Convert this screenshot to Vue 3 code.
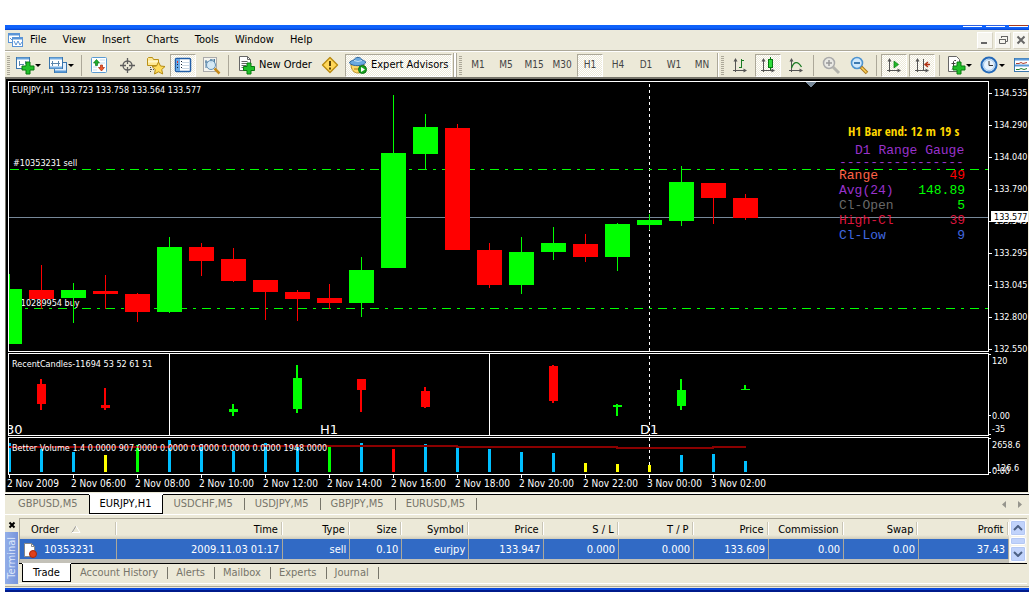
<script setup>
const menus = ['File', 'View', 'Insert', 'Charts', 'Tools', 'Window', 'Help']
const frames = ['M1', 'M5', 'M15', 'M30', 'H1', 'H4', 'D1', 'W1', 'MN']

const axes = '<path d="M4.500 3v13M2 14.500h12" stroke="#555" fill="none"/><path d="M2.500 5.500h4L4.500 2zM12.500 12.500v4L16 14.500z" fill="#555"/>'
const lens = '<circle cx="7" cy="7" r="5.5"/>'
const plus = '<path d="M10 6h4v4h4v4h-4v4h-4v-4H6v-4h4z" fill="#21c02a" stroke="#087a10"/>'
const icons = {
  newChart: `<rect x=".5" y="1.5" width="13" height="11" fill="#fff" stroke="#3b76ad"/><path d="M1 2.500h12" stroke="#6aa5dc" stroke-width="2"/><path d="M3.500 5v5M3 8.500h5M9.500 5v3" stroke="#5c87ad"/>${plus}`,
  profiles: '<rect x="5.500" y="6.500" width="12" height="10" fill="#e3effb" stroke="#3b76ad"/><path d="M6 15.500h11" stroke="#5a9ad8" stroke-width="2"/><rect x=".5" y="1.500" width="13" height="11" fill="#fff" stroke="#3b76ad"/><path d="M1 2.500h12M1 11.500h12" stroke="#78b0e4" stroke-width="2"/><path d="M3.500 5v5M2 7.500h9M9.500 5v5" stroke="#5c87ad"/>',
  market: '<rect x="1.500" y="1.500" width="15" height="15" rx="1" fill="#fff" stroke="#5a9bd3"/><path d="M10 4h5M10 7h5M3 11h4M3 14h4" stroke="#c5dced"/><path d="M6.500 3.500l3 3.500H7.500v2.500h-2V7h-2z" fill="#20b030" stroke="#0b7716" stroke-width=".7"/><path d="M11.500 15l3-3.500h-2V9h-2v2.500h-2z" fill="#ef5a2b" stroke="#a92b10" stroke-width=".7"/>',
  cross: '<circle cx="9.500" cy="9.500" r="4.500" fill="none" stroke="#5d5d5d" stroke-width="1.300"/><path d="M9.500 2v6M9.500 11v6M2 9.500h6M11 9.500h6" stroke="#5d5d5d" stroke-width="1.300"/>',
  folder: '<path d="M1.500 9.500v-7l1-1h4l1 2h5v6z" fill="#ffe890" stroke="#b99018"/><path d="M2 5.500h10" stroke="#fff6c8" stroke-width="2"/><path d="M4.500 11v5M5 13.500h3" stroke="#555" stroke-dasharray="1 1"/><path d="M12.500 6l2 4 4.500.500-3.300 3 1 4.500-4.200-2.200L8.500 18l.8-4.500-3.300-3 4.500-.5z" fill="#ffdc5a" stroke="#b38a12"/>',
  navigator: '<rect x="1.500" y="2.500" width="15" height="13" rx="1" fill="#fff" stroke="#235fa8" stroke-width="1.500"/><path d="M2 3h4v12H2z" fill="#67a8e6"/><path d="M8 6.500h7M8 9.500h7M8 12.500h7" stroke="#c9d6e2"/><path d="M3.500 5v2" stroke="#d33"/><path d="M3.500 8v6M7.500 5v9" stroke="#123" stroke-dasharray="1 2"/>',
  tester: '<rect x="1.500" y="1.500" width="13" height="14" fill="#f5f5ef" stroke="#aaa"/><path d="M4 4v8M3 6h3M9 3v4M8 4h4M12.500 3v5" stroke="#48789e"/><circle cx="9" cy="9" r="4.500" fill="#cfe6f6" fill-opacity=".85" stroke="#6390b4"/><path d="M12.500 12.500l5 5" stroke="#c58a1b" stroke-width="2.500"/>',
  order: '<path d="M1.500.5h8l3 3v11h-11z" fill="#fff" stroke="#666"/><path d="M9.500.5v3h3M3.500 5.500h6M3.500 7.500h6M3.500 9.500h5M3.500 11.500h3" stroke="#666" fill="none"/><path d="M9 7h4v3.500h3.500v4H13V18H9v-3.500H5.500v-4H9z" fill="#21c02a" stroke="#087a10"/>',
  warn: '<path d="M9 1.500L16.500 9 9 16.500 1.500 9z" fill="#ffd75a" stroke="#b98a10" stroke-width="1.400" stroke-linejoin="round"/><path d="M9 5v5M9 11.500v2" stroke="#5d4304" stroke-width="2"/>',
  expert: '<path d="M2 8c0 6 3 9 7 9s6-3 6-9z" fill="#ffd968" stroke="#b68a1e"/><path d="M5 13h5" stroke="#a87a1a"/><path d="M.5 7c0-2 3-2.500 4.500-3C6 .5 12 .5 13 4c2 .5 4 1 3.500 3-2 3-13 4-16 0z" fill="#6aa9e0" stroke="#2d659c"/><path d="M5 4.500q4 2 8 0" stroke="#c4e2f8" fill="none"/><circle cx="13.500" cy="13.500" r="4" fill="#19a321" stroke="#087010"/><path d="M12 11l4 2.500-4 2.500z" fill="#fff"/>',
  bars: axes + '<path d="M10.500 3v9M8 11.500h2M11 4.500h2" stroke="#1a7a22" stroke-width="1" fill="none"/>',
  candles: axes + '<path d="M11.500 1v13" stroke="#087a10"/><rect x="9.500" y="3.500" width="4" height="8" fill="#2fdc3a" stroke="#087a10"/>',
  line: axes + '<path d="M4.500 12c2-6 6-8 10-1" stroke="#1a7a22" stroke-width="1.300" fill="none"/>',
  zoomIn: `<g fill="#e9e9e4" stroke="#aaa" stroke-width="1.500">${lens}</g><path d="M4 7h6M7 4v6" stroke="#999" stroke-width="1.500"/><path d="M11 11l6 6" stroke="#b3b3ad" stroke-width="3"/>`,
  zoomOut: `<g fill="#cfe8fc" stroke="#4d93cf" stroke-width="1.600">${lens}</g><path d="M4 7h6" stroke="#2d6ea8" stroke-width="1.800"/><path d="M11 11l6 6" stroke="#a9761a" stroke-width="3.500"/><path d="M11.500 11.500l5 5" stroke="#ffd35a" stroke-width="1.500"/>`,
  scroll: axes + '<path d="M9 5v7l4.500-3.500z" fill="#21b82a" stroke="#087a10" stroke-width=".7"/>',
  shift: axes + '<path d="M10.500 3v11" stroke="#555"/><path d="M12 8.500h5M15 6l-3 2.500 3 2.500" stroke="#b03010" stroke-width="1.400" fill="none"/>',
  indicator: `<path d="M1.500.5h8l3 3v12h-11z" fill="#fff" stroke="#666"/><path d="M9 4.500H7.500l-1 1V12L5 13.500M4.500 7.500h4" stroke="#444" fill="none"/>${plus}`,
  clock: '<circle cx="9" cy="9" r="7.500" fill="#e8f3fd" stroke="#2469b8" stroke-width="2"/><circle cx="9" cy="9" r="5.500" fill="none" stroke="#9cc4ea"/><path d="M9 5v4.500h4" stroke="#333" fill="none"/>',
  template: '<rect x=".5" y="2.500" width="17" height="13" fill="#fff" stroke="#3b76ad"/><path d="M1 3.500h16M1 9.500h16" stroke="#5a9ad8" stroke-width="2"/><path d="M2 7.500h3l2-1 2 1 4-1" stroke="#b04030" fill="none"/><path d="M2 13.500h3l2-1 3 1 3-1" stroke="#208030" fill="none"/>'
}

const toolsLeft = [
  { icon: 'newChart', name: 'New chart', drop: true },
  { icon: 'profiles', name: 'Profiles', drop: true },
  { sep: true },
  { icon: 'market', name: 'Market Watch' },
  { icon: 'cross', name: 'Crosshair' },
  { icon: 'folder', name: 'Favorites' },
  { icon: 'navigator', name: 'Navigator', on: true },
  { icon: 'tester', name: 'Tester' },
  { sep: true }
]
const toolsRight = [
  { icon: 'bars', name: 'Bar chart' },
  { icon: 'candles', name: 'Candlesticks', on: true },
  { icon: 'line', name: 'Line chart' },
  { sep: true },
  { icon: 'zoomIn', name: 'Zoom in' },
  { icon: 'zoomOut', name: 'Zoom out' },
  { sep: true },
  { icon: 'scroll', name: 'Auto scroll', on: true },
  { icon: 'shift', name: 'Chart shift', on: true },
  { sep: true },
  { icon: 'indicator', name: 'Indicators', drop: true },
  { icon: 'clock', name: 'Periods', drop: true },
  { icon: 'template', name: 'Templates' }
]

const G = '#00ff00'
const R = '#ff0000'
const B = '#00bfff'
const Y = '#ffff00'
const STEP = 32
const heading = 'EURJPY,H1\u00a0 133.723 133.758 133.564 133.577'
// colour, high, body top, body bottom, low
const candles = [
  [G, 192, 207, 262, 262], [R, 183, 208, 217, 227], [G, 201, 208, 216, 241], [R, 193, 209, 212, 227],
  [R, 211, 212, 230, 240], [G, 155, 165, 230, 231], [R, 161, 165, 179, 194], [R, 166, 177, 199, 200],
  [R, 198, 198, 210, 238], [R, 208, 210, 217, 239], [R, 202, 216, 221, 227], [G, 175, 188, 221, 235],
  [G, 13, 71, 186, 186], [G, 32, 45, 72, 87], [R, 42, 46, 168, 168], [R, 161, 168, 203, 206],
  [G, 155, 170, 203, 212], [G, 145, 161, 170, 178], [R, 152, 162, 175, 180], [G, 141, 142, 175, 189],
  [G, 132, 138, 143, 148], [G, 84, 100, 139, 144], [R, 101, 101, 116, 142], [R, 112, 116, 136, 138]
]
// bar index, colour, high, body top, body bottom, low
const recent = [
  [1, R, 25, 30, 50, 56], [3, R, 34, 51, 54, 56], [7, G, 50, 55, 58, 62], [9, G, 11, 24, 55, 59],
  [11, R, 25, 25, 36, 58], [13, R, 33, 37, 53, 54], [17, R, 11, 12, 47, 49], [19, G, 50, 51, 53, 62],
  [21, G, 25, 36, 52, 56], [23, G, 31, 35, 36, 36]
]
const volumes = [
  [B, 29], [B, 23], [B, 20], [Y, 17], [G, 27], [B, 32], [B, 28], [B, 21], [B, 29], [B, 25], [G, 25], [B, 29],
  [R, 23], [B, 28], [B, 25], [B, 23], [B, 20], [B, 19], [Y, 9], [Y, 8], [Y, 7], [B, 17], [B, 18], [B, 11]
]
const prices = ['134.535', '134.290', '134.040', '133.790', '133.545', '133.295', '133.045', '132.800', '132.550']
const times = ['2 Nov 2009', '2 Nov 06:00', '2 Nov 08:00', '2 Nov 10:00', '2 Nov 12:00', '2 Nov 14:00', '2 Nov 16:00', '2 Nov 18:00', '2 Nov 20:00', '2 Nov 22:00', '3 Nov 00:00', '3 Nov 02:00']
const gauge = [
  ['Range', '49', 'tomato', 'red'],
  ['Avg(24)', '148.89', 'violet', 'lime'],
  ['Cl-Open', '5', 'dim', 'lime'],
  ['High-Cl', '39', 'crimson', 'crimson'],
  ['Cl-Low', '9', 'royal', 'royal']
]
const charts = ['GBPUSD,M5', 'EURJPY,H1', 'USDCHF,M5', 'USDJPY,M5', 'GBPJPY,M5', 'EURUSD,M5']
const columns = [
  ['Order', 97, '10353231'], ['Time', 166, '2009.11.03 01:17'], ['Type', 67, 'sell'], ['Size', 52, '0.10'],
  ['Symbol', 67, 'eurjpy'], ['Price', 75, '133.947'], ['S / L', 75, '0.000'], ['T / P', 75, '0.000'],
  ['Price', 75, '133.609'], ['Commission', 75, '0.00'], ['Swap', 75, '0.00'], ['Profit', 90, '37.43']
]
const pages = ['Trade', 'Account History', 'Alerts', 'Mailbox', 'Experts', 'Journal']
</script>

<template>
  <div class="app">
    <div class="title"><i></i><i></i><i class="red-btn"></i></div>
    <nav class="menu">
      <svg class="logo" width="16" height="16" viewBox="0 0 16 16">
        <rect x=".5" y="1.5" width="11" height="9" fill="#fff" stroke="#5a94d6" />
        <path d="M1 2.500h10" stroke="#5a94d6" stroke-width="2" />
        <path d="M2 6l2 2 2-3 2 2" stroke="#5a94d6" fill="none" />
        <rect x="4.500" y="5.500" width="10" height="9" fill="#fff" stroke="#5a94d6" />
        <path d="M5 6.500h9" stroke="#5a94d6" stroke-width="2" />
        <path d="M6 9l2 4 2-4 2 4 2-3" stroke="#5a94d6" fill="none" />
      </svg>
      <button v-for="m in menus" :key="m" class="menu-item">{{ m }}</button>
      <span class="mdi">
        <button aria-label="Minimize"><svg width="14" height="14"><path d="M3 10h6" stroke="#666" stroke-width="2" /></svg></button>
        <button aria-label="Restore"><svg width="14" height="14"><path d="M5.500 5V3.500h6v5H10M5 3.500h7" stroke="#666" fill="none" /><path d="M3.500 6.500h6v4h-6zM3 6.500h7" stroke="#666" fill="none" /></svg></button>
        <button aria-label="Close"><svg width="14" height="14"><path d="M3.500 3.500l7 7M10.500 3.500l-7 7" stroke="#666" stroke-width="2" /></svg></button>
      </span>
    </nav>

    <div class="toolbar">
      <span class="grip"></span>
      <template v-for="(t, i) in toolsLeft" :key="i">
        <span v-if="t.sep" class="sep"></span>
        <button v-else class="tool" :class="{ on: t.on, drop: t.drop }" :aria-label="t.name">
          <svg width="19" height="19" viewBox="0 0 19 19" v-html="icons[t.icon]"></svg>
        </button>
      </template>
      <button class="tool order"><svg width="19" height="19" viewBox="0 0 19 19" v-html="icons.order"></svg>New Order</button>
      <button class="tool" aria-label="MetaEditor"><svg width="18" height="18" viewBox="0 0 18 18" v-html="icons.warn"></svg></button>
      <button class="tool on expert"><svg width="19" height="19" viewBox="0 0 19 19" v-html="icons.expert"></svg>Expert Advisors</button>
      <span class="edge"></span>
      <span class="grip"></span>
      <button v-for="f in frames" :key="f" class="tool frame" :class="{ on: f === 'H1' }">{{ f }}</button>
      <span class="edge single"></span>
      <span class="grip"></span>
      <template v-for="(t, i) in toolsRight" :key="i">
        <span v-if="t.sep" class="sep"></span>
        <button v-else class="tool" :class="{ on: t.on, drop: t.drop }" :aria-label="t.name">
          <svg width="19" height="19" viewBox="0 0 19 19" v-html="icons[t.icon]"></svg>
        </button>
      </template>
    </div>

    <main class="chart">
      <div class="row">
        <div class="pane">
          <svg class="plot" width="100%" height="269">
            <path d="M640.500 2v267" stroke="#fff" stroke-dasharray="3 3" />
            <path d="M1 87.500h2000M1 226.500h2000" stroke="#00ff00" stroke-dasharray="9 6 3 6" />
            <path d="M0 135.500h2000" stroke="#778899" />
            <text x="3" y="11">{{ heading }}</text>
            <text x="4" y="84">#10353231 sell</text>
            <text x="5" y="224">#10289954 buy</text>
            <g v-for="(c, i) in candles" :key="i" :fill="c[0]">
              <rect :x="i * STEP" :y="c[1]" width="1" :height="c[4] - c[1]" />
              <rect :x="i * STEP - 12" :y="c[2]" width="25" :height="c[3] - c[2]" />
            </g>
            <path d="M796 0h11l-5 5z" fill="#778899" />
          </svg>
          <div class="overlay">
            <div class="countdown">H1 Bar end: 12 m 19 s</div>
            <div class="gauge">
              <div class="violet gauge-title">D1 Range Gauge</div>
              <div class="violet dashes">----------------</div>
              <div v-for="g in gauge" :key="g[0]" class="gauge-row">
                <span :class="g[2]">{{ g[0] }}</span><span :class="g[3]">{{ g[1] }}</span>
              </div>
            </div>
          </div>
        </div>
        <svg class="axis" width="39" height="271">
          <g v-for="(p, i) in prices" :key="p">
            <path :d="`M0 ${i * 32 + 12}.5h3`" stroke="#fff" />
            <text x="5" :y="i * 32 + 15">{{ p }}</text>
          </g>
          <rect x="2" y="130" width="38" height="11" fill="#fff" />
          <text x="5" y="139" class="current">133.577</text>
        </svg>
      </div>
      <div class="row">
        <div class="pane">
          <svg class="plot" width="100%" height="81">
            <path d="M160.500 0v81M480.500 0v81" stroke="#fff" />
            <path d="M640.500 2v79" stroke="#fff" stroke-dasharray="3 3" />
            <text x="3" y="13">RecentCandles-11694 53 52 61 51</text>
            <g v-for="c in recent" :key="c[0]" :fill="c[1]">
              <rect :x="c[0] * STEP - 1" :y="c[2]" width="2" :height="c[5] - c[2]" />
              <rect :x="c[0] * STEP - 4" :y="c[3]" width="9" :height="c[4] - c[3]" />
            </g>
            <g class="big">
              <text x="-3" y="80">30</text>
              <text x="311" y="80">H1</text>
              <text x="631" y="80">D1</text>
            </g>
          </svg>
        </div>
        <svg class="axis" width="39" height="83">
          <path d="M0 1.500h2M0 62.500h2M0 81.500h2" stroke="#fff" />
          <text x="3" y="11">120</text>
          <text x="3" y="66">0.00</text>
          <text x="3" y="79">-35</text>
        </svg>
      </div>
      <div class="row">
        <div class="pane">
          <svg class="plot" width="100%" height="36">
            <path d="M640.500 0v36" stroke="#fff" stroke-dasharray="3 3" />
            <rect v-for="(v, i) in volumes" :key="i" :x="i * STEP - 1" :y="34 - v[1]" width="3" :height="v[1]" :fill="v[0]" />
            <path d="M0 9h160v-1h288v1h160v1h96v-1h33" stroke="#8b0000" stroke-width="2" fill="none" />
            <text x="3" y="13">Better Volume 1.4 0.0000 907.0000 0.0000 0.0000 0.0000 0.0000 1948.0000</text>
          </svg>
        </div>
        <svg class="axis" width="39" height="38">
          <path d="M0 1.500h2M0 35.500h2" stroke="#fff" />
          <text x="3" y="11">2658.6</text>
          <text x="3" y="37">0.00</text>
          <text x="4" y="34">-126.6</text>
        </svg>
      </div>
      <svg class="times" width="100%" height="17">
        <g v-for="(t, i) in times" :key="t">
          <path :d="`M${i * 64 + 3}.5 0v3`" stroke="#fff" />
          <text :x="i * 64 + 1" y="12" class="wide">{{ t }}</text>
        </g>
      </svg>
    </main>

    <div class="tabs chart-tabs">
      <button v-for="c in charts" :key="c" :class="{ active: c === 'EURJPY,H1' }">{{ c }}</button>
      <svg class="arrows" width="24" height="9"><path d="M5 1v7L1 4.500zM17 1v7l4-3.500z" fill="#96958d" /></svg>
    </div>

    <section class="terminal">
      <aside>
        <button class="shut" aria-label="Close terminal"><svg width="8" height="8"><path d="M1.500 1.500l5 5M6.500 1.500l-5 5" stroke="#000" stroke-width="2" /></svg></button>
        <div class="side"><span>Terminal</span></div>
      </aside>
      <div class="body">
        <div class="grid">
          <table>
            <colgroup><col v-for="(c, i) in columns" :key="i" :class="`w${c[1]}`" /></colgroup>
            <thead>
              <tr>
                <th v-for="(c, i) in columns" :key="i">{{ c[0] }}<svg v-if="i === 0" width="10" height="8"><path d="M1 7.500L5 1" stroke="#999" fill="none" /><path d="M5 1l4 6.500H1" stroke="#fff" fill="none" /></svg></th>
              </tr>
            </thead>
            <tbody>
              <tr>
                <td v-for="(c, i) in columns" :key="i">
                  <svg v-if="i === 0" width="15" height="16"><path d="M1.500 1.500h7l3 3v10h-10z" fill="#fff" stroke="#888" /><path d="M8.500 1.500v3h3" stroke="#888" fill="none" /><circle cx="10" cy="12" r="3.500" fill="#e0401a" stroke="#a82808" /></svg>{{ c[2] }}
                </td>
              </tr>
            </tbody>
          </table>
          <div class="scroll">
            <button aria-label="Scroll up"><svg width="10" height="6"><path d="M1 5l4-4 4 4" stroke="#4d6185" stroke-width="2" fill="none" /></svg></button>
            <span class="thumb"></span>
            <button aria-label="Scroll down"><svg width="10" height="6"><path d="M1 1l4 4 4-4" stroke="#4d6185" stroke-width="2" fill="none" /></svg></button>
          </div>
        </div>
        <div class="tabs pages">
          <button v-for="p in pages" :key="p" :class="{ active: p === 'Trade' }">{{ p }}</button>
        </div>
      </div>
    </section>
    <div class="foot"></div>
  </div>
</template>

<style>
body { background: #fff; }
</style>

<style scoped>
* { box-sizing: border-box; }
.app {
  margin: 25px 5px 0;
  background: #ece9d8;
  color: #000;
  font: 11px/14px "DejaVu Sans Condensed", "Noto Sans", sans-serif;
  overflow: hidden;
}
button { margin: 0; padding: 0; border: 0; background: none; color: inherit; font: inherit; white-space: nowrap; flex: none; }
svg { display: block; flex: none; }

.title { height: 5px; background: linear-gradient(#0f62fb 60%, #0540cf); display: flex; justify-content: flex-end; gap: 4px; padding-right: 1px; }
.title i { width: 19px; height: 2px; background: #2b5fe0; border-bottom: 1px solid #fff; }
.title .red-btn { background: #a3381c; }

.menu { display: flex; align-items: center; height: 20px; padding-left: 3px; background: #eceadb; }
.logo { margin-right: 5px; }
.menu-item { padding: 0 8px; }
.menu-item:first-of-type { padding-left: 1px; }
.mdi { margin-left: auto; display: flex; gap: 2px; }
.mdi button { width: 16px; height: 17px; background: #f6f5ef; border: 1px solid #fff; border-right-color: #d6d2c2; border-bottom-color: #d6d2c2; }

.toolbar {
  display: flex; align-items: center; height: 29px; padding-top: 2px;
  border-top: 1px solid #aca899; border-bottom: 2px solid #77756b;
  box-shadow: inset 0 1px #fff; overflow: hidden;
}
.grip { flex: none; width: 3px; height: 19px; margin: 0 2px; background: repeating-linear-gradient(#aca899 0 1px, #ece9d8 1px 2px); }
.sep { flex: none; width: 1px; height: 21px; margin: 0 3px; background: #aca899; }
.tool { width: 28px; height: 23px; display: flex; align-items: center; justify-content: center; border: 1px solid transparent; }
.tool.on {
  width: 26px; margin: 0 1px; border-color: #aca899 #fff #fff #aca899;
  background: repeating-conic-gradient(#fff 0 25%, #ece9d8 0 50%) 0 0 / 2px 2px;
}
.tool.drop { width: 33px; justify-content: flex-start; padding-left: 3px; }
.tool.drop::after { content: ""; border: 3px solid transparent; border-top-color: #000; border-bottom: 0; }
.tool.order { width: 84px; justify-content: flex-start; padding-left: 5px; gap: 2px; }
.tool.expert { width: 107px; justify-content: flex-start; margin: 0 0 0 1px; padding-left: 3px; gap: 3px; }
.frame { color: #444; font-size: 10px; }
.edge { flex: none; width: 4px; height: 25px; margin: 0 0 0 1px; border: 1px solid #aca899; border-width: 0 1px; background: #fff; }
.edge.single { width: 2px; border-right: 0; }

.chart { background: #000; border-left: 1px solid #77756b; padding: 2px 0 0 2px; margin: 0 1px 2px 0; }
.row { display: flex; margin-bottom: 1px; }
.row:nth-child(3) { margin-bottom: 0; }
.pane { position: relative; flex: 1; min-width: 0; border: 1px solid #fff; }
.plot, .axis, .times { overflow: hidden; shape-rendering: crispEdges; }
text { fill: #fff; font: 9px "DejaVu Sans Condensed", "Noto Sans", sans-serif; white-space: pre; }
text.wide { font-size: 10px; }
.big text { font-size: 13px; font-family: "DejaVu Sans", sans-serif; }
text.current { fill: #000; }
.times { margin-left: -2px; }
.overlay { position: absolute; top: 41px; right: 21px; width: 128px; }
.countdown { margin-left: 9px; color: #ffd700; font: bold 13px/16px "Liberation Sans Narrow", "Open Sans Condensed", sans-serif; white-space: nowrap; }
.gauge { font: 13px/15px "Liberation Mono", monospace; }
.gauge-title { padding-left: 16px; margin-top: 4px; white-space: nowrap; }
.dashes { line-height: 10px; }
.gauge-row { display: flex; justify-content: space-between; padding-right: 2px; }
.violet { color: #9932cc; }
.tomato { color: #ff6347; }
.red { color: #ff0000; }
.lime { color: #00ff00; }
.dim { color: #696969; }
.crimson { color: #dc143c; }
.royal { color: #4169e1; }

.tabs { display: flex; align-items: flex-start; border-top: 1px solid #000; border-bottom: 1px solid #fff; color: #77756a; height: 21px; }
.tabs button { position: relative; height: 18px; padding: 0 11px; }
.tabs button:not(.active)::after { content: ""; position: absolute; right: -1px; top: 3px; height: 12px; border-right: 1px solid #77756a; }
.tabs button:has(+ .active)::after { display: none; }
.tabs .active { background: #fff; color: #000; border: 1px solid #000; border-top: 0; box-shadow: 0 -1px #fff; padding: 0 10px; }
.chart-tabs { padding-left: 2px; box-shadow: 0 -1px #fff; }
.chart-tabs .active { height: 19px; }
.arrows { margin: 5px 4px 0 auto; }

.terminal { display: flex; margin-top: 3px; }
aside { width: 13px; display: flex; flex-direction: column; align-items: center; flex: none; }
.shut { height: 14px; display: flex; align-items: center; }
.side { width: 13px; flex: 1; display: flex; align-items: center; justify-content: center; background: linear-gradient(90deg, #92aee8, #7794dc); color: #dde7fb; }
.side span { writing-mode: vertical-rl; transform: rotate(180deg); line-height: 13px; }
.body { flex: 1; min-width: 0; margin-left: 1px; }
.grid { display: flex; border: 1px solid #aca899; border-width: 1px 0 0 1px; margin-right: 2px; height: 45px; background: #c3c1b8; }
table { flex: 1; min-width: 0; table-layout: fixed; border-collapse: collapse; align-self: flex-start; }
th, td { padding: 1px 0 0; text-align: right; font-weight: normal; white-space: nowrap; }
th { height: 20px; padding-right: 5px; background: linear-gradient(90deg, #fff, #fff) right 0 top 3px / 1px 13px no-repeat, linear-gradient(90deg, #c9c5b5, #c9c5b5) right 1px top 3px / 1px 13px no-repeat, linear-gradient(#ece9d8 16px, #cfccbc); }
td { height: 20px; padding-right: 3px; color: #fff; background: #316ac5; border-right: 1px solid #aca899; }
th:first-child, td:first-child { text-align: left; padding-left: 11px; }
td:first-child { padding-left: 3px; }
th svg { display: inline-block; margin-left: 12px; }
td svg { display: inline-block; vertical-align: middle; margin-right: 6px; }
.w97 { width: 97px; } .w166 { width: 166px; } .w67 { width: 67px; } .w52 { width: 52px; } .w75 { width: 75px; } .w90 { width: 90px; }
.scroll { width: 18px; display: flex; flex-direction: column; justify-content: space-between; align-items: center; background: #f3f1e8; padding: 1px 0; }
.scroll button, .thumb { width: 16px; height: 16px; border: 1px solid #fff; border-radius: 2px; background: #c1d3fb; display: flex; align-items: center; justify-content: center; box-shadow: inset 0 0 0 1px #b3c7f4; }
.scroll .thumb { height: 8px; }
.pages { margin-right: 2px; }
.pages .active { margin-left: 3px; padding: 0 10px; }
.pages button:not(.active) { padding: 0 9px; }
.foot { height: 8px; background: linear-gradient(#ece9d8 2px, #aca899 2px 3px, #ece9d8 3px 4px, #0a48dc 4px 6px, #001b8c 6px); }
</style>
